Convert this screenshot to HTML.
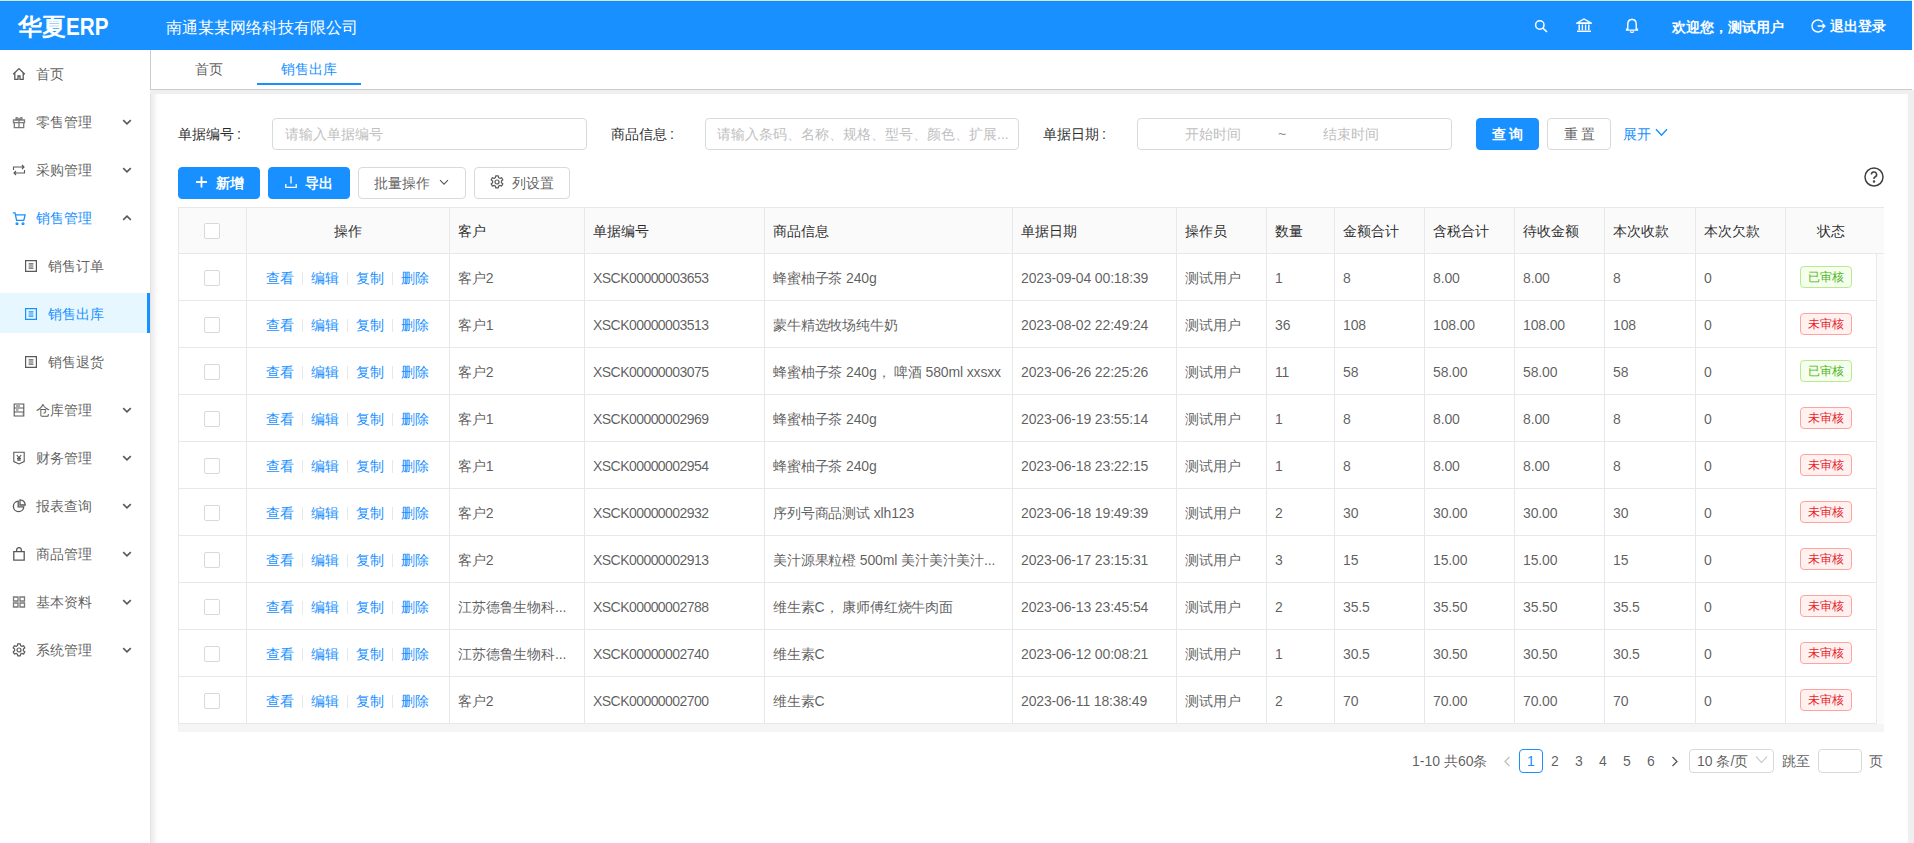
<!DOCTYPE html>
<html><head><meta charset="utf-8">
<style>
*{box-sizing:border-box;margin:0;padding:0}
html,body{width:1914px;height:843px;overflow:hidden;background:#fff;font-family:"Liberation Sans",sans-serif;font-size:14px;color:rgba(0,0,0,.65)}
.abs{position:absolute}
#hdr{left:0;top:0;width:1912px;height:50px;background:#1890ff;border-top:1px solid #b8f2ff;box-shadow:inset 0 1px 0 #2c84dc}
#logo{left:18px;top:11px;color:#fff;font-size:24px;font-weight:bold;line-height:32px}#logo span{display:inline-block;font-size:24px;transform:scaleX(.86);transform-origin:0 50%}
#company{left:166px;top:17px;color:#fff;font-size:16px;line-height:22px;font-weight:500}
.hicon{top:17px}
#welcome{left:1672px;top:17px;color:#fff;font-size:14px;line-height:20px;font-weight:700}
#logout{left:1830px;top:16px;color:#fff;font-size:14px;line-height:20px;font-weight:700}
#side{left:0;top:50px;width:150px;height:793px;background:#fff}
.mi{position:absolute;left:0;width:150px;height:40px;line-height:40px;font-size:14px;color:rgba(0,0,0,.65)}
.mi .ic{position:absolute;left:12px;top:14px;width:14px;height:14px}
.mi .tx{position:absolute;left:36px;top:1px}
.mi .ch{position:absolute;left:122px;top:18px;width:10px;height:6px}
.mi.sub .ic{left:24px}
.mi.sub .tx{left:48px}
.mi.sel{background:#e6f7ff;color:#1890ff}
.mi.sel:after{content:"";position:absolute;right:0;top:0;width:3px;height:40px;background:#1890ff}
#sideline{left:150px;top:50px;width:1px;height:40px;background:#cccccc}
#graybg{left:150px;top:90px;width:1764px;height:753px;background:#efefef}
#tabs{left:151px;top:50px;width:1761px;height:40px;background:#fff;border-bottom:1px solid #cccccc}
.tab{position:absolute;top:9px;line-height:20px;font-size:14px;color:rgba(0,0,0,.65)}
#card{left:154px;top:94px;width:1754px;height:760px;background:#fff}
#rstrip{left:1912px;top:0;width:2px;height:90px;background:#fff}
.lbl{position:absolute;top:124px;line-height:20px;color:rgba(0,0,0,.85);font-size:14px}
.inp{position:absolute;top:118px;height:32px;border:1px solid #d9d9d9;border-radius:4px;background:#fff}
.ph{position:absolute;top:5px;line-height:20px;color:#bfbfbf;font-size:14px;white-space:nowrap}
.btn{position:absolute;height:32px;border-radius:4px;border:1px solid #d9d9d9;background:#fff;color:rgba(0,0,0,.65);font-size:14px;line-height:30px;white-space:nowrap}
.btn.pri{background:#1890ff;border-color:#1890ff;color:#fff}

.hl{position:absolute;left:178px;height:1px;background:#e8e8e8}
.vl{position:absolute;top:207px;width:1px;height:517px;background:#e8e8e8}
.th{position:absolute;margin-top:1px;line-height:20px;color:rgba(0,0,0,.85);white-space:nowrap}
.td{position:absolute;margin-top:1px;line-height:20px;color:rgba(0,0,0,.65);white-space:nowrap;letter-spacing:-0.15px}
.cb{position:absolute;width:16px;height:16px;border:1px solid #d9d9d9;border-radius:2px;background:#fff}
.ops{position:absolute;margin-top:1px;line-height:20px;color:#1890ff;white-space:nowrap;display:flex;align-items:center}
.ops i{display:inline-block;width:1px;height:13px;background:#e8e8e8;margin:0 8px}
.tag{position:absolute;width:52px;height:22px;line-height:21px;font-size:12px;text-align:center;border:1px solid;border-radius:4px}
.tag.g{color:#4db522;background:#f6ffed;border-color:#b7eb8f}
.tag.r{color:#e8222b;background:#fff1f0;border-color:#ffa39e}
.pg{top:749px;width:24px;height:24px;text-align:center;line-height:24px}
</style></head><body>
<div id="hdr" class="abs"></div>
<div id="logo" class="abs">华夏<span>ERP</span></div>
<div id="company" class="abs">南通某某网络科技有限公司</div>
<svg class="abs" style="left:1534px;top:19px" width="14" height="14" viewBox="0 0 14 14" fill="none" stroke="#fff" stroke-width="1.5"><circle cx="5.8" cy="6" r="4.2"/><path d="M8.9 9.1 13 13"/></svg>
<svg class="abs" style="left:1576px;top:18px" width="16" height="15" viewBox="0 0 16 15" fill="none" stroke="#fff" stroke-width="1.4"><path d="M1 5 8 1l7 4zM1.5 5.2h13M3.2 6.5v5.5M6.4 6.5v5.5M9.6 6.5v5.5M12.8 6.5v5.5M1 13.3h14"/></svg>
<svg class="abs" style="left:1625px;top:18px" width="14" height="15" viewBox="0 0 14 15" fill="none" stroke="#fff" stroke-width="1.4"><path d="M7 1.5c-2.6 0-4.2 2-4.2 4.6v5.2H1.6v.8h10.8v-.8h-1.2V6.1C11.2 3.5 9.6 1.5 7 1.5zM5.6 13.2a1.4 1.4 0 0 0 2.8 0M7 .4v1.1"/></svg>
<svg class="abs" style="left:1811px;top:19px" width="15" height="14" viewBox="0 0 15 14" fill="none" stroke="#fff" stroke-width="1.4"><path d="M11.6 3.2A6 6 0 1 0 11.6 10.8M6.5 7h7.5M11.5 4.8 13.8 7l-2.3 2.2"/></svg>
<div id="welcome" class="abs">欢迎您，测试用户</div>
<div id="logout" class="abs">退出登录</div>
<div id="rstrip" class="abs"></div>

<div id="side" class="abs">
 <div class="mi" style="top:3px"><svg class="ic" viewBox="0 0 14 14" fill="none" stroke="#595959" stroke-width="1.3"><path d="M1.2 7.2 7 1.6l5.8 5.6M2.8 5.8v6.6h3.2V9h2v3.4h3.2V5.8"/></svg><span class="tx">首页</span></div>
 <div class="mi" style="top:51px"><svg class="ic" viewBox="0 0 14 14" fill="none" stroke="#7a7a7a" stroke-width="1.3"><path d="M1.5 5h11v2.6h-11zM2.3 7.6v5h9.4v-5M7 5v7.6M7 5C5.5 2 3.8 2.2 4 3.6 4.2 4.8 7 5 7 5c0 0 2.8-.2 3-1.4.2-1.4-1.5-1.6-3 1.4"/></svg><span class="tx">零售管理</span><svg class="ch" viewBox="0 0 10 6" fill="none" stroke="#595959" stroke-width="1.6"><path d="M1.2 1.2 5 4.8 8.8 1.2"/></svg></div>
 <div class="mi" style="top:99px"><svg class="ic" viewBox="0 0 14 14" fill="none" stroke="#595959" stroke-width="1.1"><path d="M1.5 7V4h10.5M10 2l2 2-2 2M12.5 7v3H2M4 12l-2-2 2-2"/></svg><span class="tx">采购管理</span><svg class="ch" viewBox="0 0 10 6" fill="none" stroke="#595959" stroke-width="1.6"><path d="M1.2 1.2 5 4.8 8.8 1.2"/></svg></div>
 <div class="mi" style="top:147px;color:#1890ff"><svg class="ic" viewBox="0 0 14 14" fill="none" stroke="#1890ff" stroke-width="1.3"><path d="M.8 1.8h2.2l1.6 7.6h7.2l1.3-5.6H3.6M5 11.8a.9.9 0 1 0 .01 0M11 11.8a.9.9 0 1 0 .01 0"/></svg><span class="tx">销售管理</span><svg class="ch" viewBox="0 0 10 6" fill="none" stroke="#595959" stroke-width="1.6"><path d="M1.2 4.8 5 1.2 8.8 4.8"/></svg></div>
 <div class="mi sub" style="top:195px"><svg class="ic" viewBox="0 0 14 14" fill="none" stroke="#595959" stroke-width="1.2"><path d="M1.6 1.6h10.8v10.8H1.6zM4.6 4.8h4.8M4.6 7h4.8M4.6 9.2h4.8"/></svg><span class="tx">销售订单</span></div>
 <div class="mi sub sel" style="top:243px"><svg class="ic" viewBox="0 0 14 14" fill="none" stroke="#1890ff" stroke-width="1.2"><path d="M1.6 1.6h10.8v10.8H1.6zM4.6 4.8h4.8M4.6 7h4.8M4.6 9.2h4.8"/></svg><span class="tx">销售出库</span></div>
 <div class="mi sub" style="top:291px"><svg class="ic" viewBox="0 0 14 14" fill="none" stroke="#595959" stroke-width="1.2"><path d="M1.6 1.6h10.8v10.8H1.6zM4.6 4.8h4.8M4.6 7h4.8M4.6 9.2h4.8"/></svg><span class="tx">销售退货</span></div>
 <div class="mi" style="top:339px"><svg class="ic" viewBox="0 0 14 14" fill="none" stroke="#595959" stroke-width="1.1"><path d="M2.2 1h9.6v12H2.2zM2.2 5h9.6M2.2 9h9.6M4 3h4M4 7h2.5M10 11h.6"/></svg><span class="tx">仓库管理</span><svg class="ch" viewBox="0 0 10 6" fill="none" stroke="#595959" stroke-width="1.6"><path d="M1.2 1.2 5 4.8 8.8 1.2"/></svg></div>
 <div class="mi" style="top:387px"><svg class="ic" viewBox="0 0 14 14" fill="none" stroke="#595959" stroke-width="1.1"><path d="M1.8 1.2h10.4v9.4L7 13l-5.2-2.4zM4.8 4l2.2 2.6L9.2 4M7 6.6V10M5 7.4h4M5 9h4"/></svg><span class="tx">财务管理</span><svg class="ch" viewBox="0 0 10 6" fill="none" stroke="#595959" stroke-width="1.6"><path d="M1.2 1.2 5 4.8 8.8 1.2"/></svg></div>
 <div class="mi" style="top:435px"><svg class="ic" viewBox="0 0 14 14" fill="none" stroke="#595959" stroke-width="1.3"><path d="M6.2 2.2a5.2 5.2 0 1 0 5.6 5.6H6.2zM8 .8v5.2h5.2A5.2 5.2 0 0 0 8 .8z"/></svg><span class="tx">报表查询</span><svg class="ch" viewBox="0 0 10 6" fill="none" stroke="#595959" stroke-width="1.6"><path d="M1.2 1.2 5 4.8 8.8 1.2"/></svg></div>
 <div class="mi" style="top:483px"><svg class="ic" viewBox="0 0 14 14" fill="none" stroke="#595959" stroke-width="1.3"><path d="M1.8 4.6h10.4v8.6H1.8zM4.6 4.6V3a2.4 2.4 0 0 1 4.8 0v1.6"/></svg><span class="tx">商品管理</span><svg class="ch" viewBox="0 0 10 6" fill="none" stroke="#595959" stroke-width="1.6"><path d="M1.2 1.2 5 4.8 8.8 1.2"/></svg></div>
 <div class="mi" style="top:531px"><svg class="ic" viewBox="0 0 14 14" fill="none" stroke="#7a7a7a" stroke-width="1.3"><path d="M1.5 2h4.5v4H1.5zM8 2h4.5v4H8zM1.5 8h4.5v4H1.5zM8 8h4.5v4H8z"/></svg><span class="tx">基本资料</span><svg class="ch" viewBox="0 0 10 6" fill="none" stroke="#595959" stroke-width="1.6"><path d="M1.2 1.2 5 4.8 8.8 1.2"/></svg></div>
 <div class="mi" style="top:579px"><svg class="ic" viewBox="0 0 14 14" fill="none" stroke="#595959" stroke-width="1.2"><path d="M5.8.9h2.4l.4 1.8 1.3.7 1.7-.6 1.2 2.1-1.4 1.2v1.6l1.4 1.2-1.2 2.1-1.7-.6-1.3.7-.4 1.8H5.8l-.4-1.8-1.3-.7-1.7.6-1.2-2.1 1.4-1.2V6.1L1.2 4.9l1.2-2.1 1.7.6 1.3-.7z"/><circle cx="7" cy="7" r="2"/></svg><span class="tx">系统管理</span><svg class="ch" viewBox="0 0 10 6" fill="none" stroke="#595959" stroke-width="1.6"><path d="M1.2 1.2 5 4.8 8.8 1.2"/></svg></div>
</div>
<div id="sideline" class="abs"></div>
<div id="graybg" class="abs"></div>
<div id="tabs" class="abs">
  <div class="tab" style="left:44px">首页</div>
  <div class="tab" style="left:130px;color:#1890ff">销售出库</div>
  <div class="abs" style="left:106px;top:33px;width:104px;height:2px;background:#1890ff"></div>
</div>
<div id="card" class="abs"></div>
<div class="abs" style="left:150px;top:94px;width:9px;height:749px;background:linear-gradient(to right,#e3e3e3 0,#e3e3e3 1px,#ececec 1px,#f0f0f0 3px,#f6f6f6 5px,#fcfcfc 7px,#fff 9px)"></div>

<div class="lbl" style="left:178px">单据编号<span style="margin-left:3px">:</span></div>
<div class="inp" style="left:272px;width:315px"><span class="ph" style="left:12px">请输入单据编号</span></div>
<div class="lbl" style="left:611px">商品信息<span style="margin-left:3px">:</span></div>
<div class="inp" style="left:705px;width:314px"><span class="ph" style="left:11px">请输入条码、名称、规格、型号、颜色、扩展...</span></div>
<div class="lbl" style="left:1043px">单据日期<span style="margin-left:3px">:</span></div>
<div class="inp" style="left:1137px;width:315px"><span class="ph" style="left:47px">开始时间</span><span class="ph" style="left:140px;color:#8c8c8c">~</span><span class="ph" style="left:185px">结束时间</span></div>
<div class="btn pri" style="left:1476px;top:118px;width:63px;text-align:center;letter-spacing:3px;padding-left:3px;font-weight:700">查询</div>
<div class="btn" style="left:1547px;top:118px;width:64px;text-align:center;letter-spacing:3px;padding-left:3px">重置</div>
<div class="abs" style="left:1623px;top:124px;line-height:20px;color:#1890ff">展开</div>
<svg class="abs" style="left:1655px;top:128px" width="13" height="9" viewBox="0 0 13 9" fill="none" stroke="#1890ff" stroke-width="1.4"><path d="M1 1.2l5.5 6 5.5-6"/></svg>

<div class="btn pri" style="left:178px;top:167px;width:82px"></div>
<svg class="abs" style="left:196px;top:176px" width="11" height="12" viewBox="0 0 11 12" fill="none" stroke="#fff" stroke-width="1.8"><path d="M5.5 .5v11M0 6h11"/></svg>
<div class="abs" style="left:216px;top:173px;line-height:20px;color:#fff;font-weight:700">新增</div>
<div class="btn pri" style="left:268px;top:167px;width:82px"></div>
<svg class="abs" style="left:285px;top:176px" width="12" height="12" viewBox="0 0 12 12" fill="none" stroke="#fff" stroke-width="1.3"><path d="M6 .3v7.2M.8 8v3.4h10.4V8"/></svg>
<div class="abs" style="left:305px;top:173px;line-height:20px;color:#fff;font-weight:700">导出</div>
<div class="btn" style="left:358px;top:167px;width:108px"></div>
<div class="abs" style="left:374px;top:173px;line-height:20px">批量操作</div>
<svg class="abs" style="left:439px;top:179px" width="10" height="7" viewBox="0 0 10 7" fill="none" stroke="#595959" stroke-width="1.1"><path d="M1 1.2l4 4 4-4"/></svg>
<div class="btn" style="left:474px;top:167px;width:96px"></div>
<svg class="abs" style="left:490px;top:175px" width="14" height="14" viewBox="0 0 14 14" fill="none" stroke="#595959" stroke-width="1.2"><path d="M5.8.9h2.4l.4 1.8 1.3.7 1.7-.6 1.2 2.1-1.4 1.2v1.6l1.4 1.2-1.2 2.1-1.7-.6-1.3.7-.4 1.8H5.8l-.4-1.8-1.3-.7-1.7.6-1.2-2.1 1.4-1.2V6.1L1.2 4.9l1.2-2.1 1.7.6 1.3-.7z"/><circle cx="7" cy="7" r="2"/></svg>
<div class="abs" style="left:512px;top:173px;line-height:20px">列设置</div>
<svg class="abs" style="left:1864px;top:167px" width="20" height="20" viewBox="0 0 20 20" fill="none" stroke="#404040" stroke-width="1.5"><circle cx="10" cy="10" r="9"/><path d="M7.4 7.6a2.6 2.6 0 1 1 3.6 2.4c-.7.3-1 .8-1 1.5v.6"/><circle cx="10" cy="14.6" r=".5" fill="#404040"/></svg>
<div class="abs" style="left:178px;top:207px;width:1706px;height:46px;background:#fafafa"></div>
<div class="abs" style="left:178px;top:724px;width:1706px;height:8px;background:#f5f5f5"></div>
<div class="abs" style="left:1876px;top:253px;width:8px;height:471px;background:#fbfbfb"></div>
<div class="hl" style="top:207px;width:1706px"></div>
<div class="hl" style="top:253px;width:1706px"></div>
<div class="hl" style="top:300px;width:1698px"></div>
<div class="hl" style="top:347px;width:1698px"></div>
<div class="hl" style="top:394px;width:1698px"></div>
<div class="hl" style="top:441px;width:1698px"></div>
<div class="hl" style="top:488px;width:1698px"></div>
<div class="hl" style="top:535px;width:1698px"></div>
<div class="hl" style="top:582px;width:1698px"></div>
<div class="hl" style="top:629px;width:1698px"></div>
<div class="hl" style="top:676px;width:1698px"></div>
<div class="hl" style="top:723px;width:1698px"></div>
<div class="vl" style="left:178px"></div>
<div class="vl" style="left:246px"></div>
<div class="vl" style="left:449px"></div>
<div class="vl" style="left:584px"></div>
<div class="vl" style="left:764px"></div>
<div class="vl" style="left:1012px"></div>
<div class="vl" style="left:1176px"></div>
<div class="vl" style="left:1266px"></div>
<div class="vl" style="left:1334px"></div>
<div class="vl" style="left:1424px"></div>
<div class="vl" style="left:1514px"></div>
<div class="vl" style="left:1604px"></div>
<div class="vl" style="left:1695px"></div>
<div class="vl" style="left:1785px"></div>
<div class="vl" style="left:1876px;top:253px;height:471px"></div>
<div class="cb" style="left:204px;top:223px"></div>
<div class="th" style="left:246px;top:220px;width:203px;text-align:center">操作</div>
<div class="th" style="left:458px;top:220px">客户</div>
<div class="th" style="left:593px;top:220px">单据编号</div>
<div class="th" style="left:773px;top:220px">商品信息</div>
<div class="th" style="left:1021px;top:220px">单据日期</div>
<div class="th" style="left:1185px;top:220px">操作员</div>
<div class="th" style="left:1275px;top:220px">数量</div>
<div class="th" style="left:1343px;top:220px">金额合计</div>
<div class="th" style="left:1433px;top:220px">含税合计</div>
<div class="th" style="left:1523px;top:220px">待收金额</div>
<div class="th" style="left:1613px;top:220px">本次收款</div>
<div class="th" style="left:1704px;top:220px">本次欠款</div>
<div class="th" style="left:1785px;top:220px;width:91px;text-align:center">状态</div>
<div class="cb" style="left:204px;top:270px"></div>
<div class="ops" style="left:266px;top:267px"><span>查看</span><i></i><span>编辑</span><i></i><span>复制</span><i></i><span>删除</span></div>
<div class="td" style="left:458px;top:267px">客户2</div>
<div class="td" style="left:593px;top:267px;letter-spacing:-0.55px">XSCK00000003653</div>
<div class="td" style="left:773px;top:267px">蜂蜜柚子茶 240g</div>
<div class="td" style="left:1021px;top:267px">2023-09-04 00:18:39</div>
<div class="td" style="left:1185px;top:267px">测试用户</div>
<div class="td" style="left:1275px;top:267px">1</div>
<div class="td" style="left:1343px;top:267px">8</div>
<div class="td" style="left:1433px;top:267px">8.00</div>
<div class="td" style="left:1523px;top:267px">8.00</div>
<div class="td" style="left:1613px;top:267px">8</div>
<div class="td" style="left:1704px;top:267px">0</div>
<div class="tag g" style="left:1800px;top:266px">已审核</div>
<div class="cb" style="left:204px;top:317px"></div>
<div class="ops" style="left:266px;top:314px"><span>查看</span><i></i><span>编辑</span><i></i><span>复制</span><i></i><span>删除</span></div>
<div class="td" style="left:458px;top:314px">客户1</div>
<div class="td" style="left:593px;top:314px;letter-spacing:-0.55px">XSCK00000003513</div>
<div class="td" style="left:773px;top:314px">蒙牛精选牧场纯牛奶</div>
<div class="td" style="left:1021px;top:314px">2023-08-02 22:49:24</div>
<div class="td" style="left:1185px;top:314px">测试用户</div>
<div class="td" style="left:1275px;top:314px">36</div>
<div class="td" style="left:1343px;top:314px">108</div>
<div class="td" style="left:1433px;top:314px">108.00</div>
<div class="td" style="left:1523px;top:314px">108.00</div>
<div class="td" style="left:1613px;top:314px">108</div>
<div class="td" style="left:1704px;top:314px">0</div>
<div class="tag r" style="left:1800px;top:313px">未审核</div>
<div class="cb" style="left:204px;top:364px"></div>
<div class="ops" style="left:266px;top:361px"><span>查看</span><i></i><span>编辑</span><i></i><span>复制</span><i></i><span>删除</span></div>
<div class="td" style="left:458px;top:361px">客户2</div>
<div class="td" style="left:593px;top:361px;letter-spacing:-0.55px">XSCK00000003075</div>
<div class="td" style="left:773px;top:361px">蜂蜜柚子茶 240g， 啤酒 580ml xxsxx</div>
<div class="td" style="left:1021px;top:361px">2023-06-26 22:25:26</div>
<div class="td" style="left:1185px;top:361px">测试用户</div>
<div class="td" style="left:1275px;top:361px">11</div>
<div class="td" style="left:1343px;top:361px">58</div>
<div class="td" style="left:1433px;top:361px">58.00</div>
<div class="td" style="left:1523px;top:361px">58.00</div>
<div class="td" style="left:1613px;top:361px">58</div>
<div class="td" style="left:1704px;top:361px">0</div>
<div class="tag g" style="left:1800px;top:360px">已审核</div>
<div class="cb" style="left:204px;top:411px"></div>
<div class="ops" style="left:266px;top:408px"><span>查看</span><i></i><span>编辑</span><i></i><span>复制</span><i></i><span>删除</span></div>
<div class="td" style="left:458px;top:408px">客户1</div>
<div class="td" style="left:593px;top:408px;letter-spacing:-0.55px">XSCK00000002969</div>
<div class="td" style="left:773px;top:408px">蜂蜜柚子茶 240g</div>
<div class="td" style="left:1021px;top:408px">2023-06-19 23:55:14</div>
<div class="td" style="left:1185px;top:408px">测试用户</div>
<div class="td" style="left:1275px;top:408px">1</div>
<div class="td" style="left:1343px;top:408px">8</div>
<div class="td" style="left:1433px;top:408px">8.00</div>
<div class="td" style="left:1523px;top:408px">8.00</div>
<div class="td" style="left:1613px;top:408px">8</div>
<div class="td" style="left:1704px;top:408px">0</div>
<div class="tag r" style="left:1800px;top:407px">未审核</div>
<div class="cb" style="left:204px;top:458px"></div>
<div class="ops" style="left:266px;top:455px"><span>查看</span><i></i><span>编辑</span><i></i><span>复制</span><i></i><span>删除</span></div>
<div class="td" style="left:458px;top:455px">客户1</div>
<div class="td" style="left:593px;top:455px;letter-spacing:-0.55px">XSCK00000002954</div>
<div class="td" style="left:773px;top:455px">蜂蜜柚子茶 240g</div>
<div class="td" style="left:1021px;top:455px">2023-06-18 23:22:15</div>
<div class="td" style="left:1185px;top:455px">测试用户</div>
<div class="td" style="left:1275px;top:455px">1</div>
<div class="td" style="left:1343px;top:455px">8</div>
<div class="td" style="left:1433px;top:455px">8.00</div>
<div class="td" style="left:1523px;top:455px">8.00</div>
<div class="td" style="left:1613px;top:455px">8</div>
<div class="td" style="left:1704px;top:455px">0</div>
<div class="tag r" style="left:1800px;top:454px">未审核</div>
<div class="cb" style="left:204px;top:505px"></div>
<div class="ops" style="left:266px;top:502px"><span>查看</span><i></i><span>编辑</span><i></i><span>复制</span><i></i><span>删除</span></div>
<div class="td" style="left:458px;top:502px">客户2</div>
<div class="td" style="left:593px;top:502px;letter-spacing:-0.55px">XSCK00000002932</div>
<div class="td" style="left:773px;top:502px">序列号商品测试 xlh123</div>
<div class="td" style="left:1021px;top:502px">2023-06-18 19:49:39</div>
<div class="td" style="left:1185px;top:502px">测试用户</div>
<div class="td" style="left:1275px;top:502px">2</div>
<div class="td" style="left:1343px;top:502px">30</div>
<div class="td" style="left:1433px;top:502px">30.00</div>
<div class="td" style="left:1523px;top:502px">30.00</div>
<div class="td" style="left:1613px;top:502px">30</div>
<div class="td" style="left:1704px;top:502px">0</div>
<div class="tag r" style="left:1800px;top:501px">未审核</div>
<div class="cb" style="left:204px;top:552px"></div>
<div class="ops" style="left:266px;top:549px"><span>查看</span><i></i><span>编辑</span><i></i><span>复制</span><i></i><span>删除</span></div>
<div class="td" style="left:458px;top:549px">客户2</div>
<div class="td" style="left:593px;top:549px;letter-spacing:-0.55px">XSCK00000002913</div>
<div class="td" style="left:773px;top:549px">美汁源果粒橙 500ml 美汁美汁美汁...</div>
<div class="td" style="left:1021px;top:549px">2023-06-17 23:15:31</div>
<div class="td" style="left:1185px;top:549px">测试用户</div>
<div class="td" style="left:1275px;top:549px">3</div>
<div class="td" style="left:1343px;top:549px">15</div>
<div class="td" style="left:1433px;top:549px">15.00</div>
<div class="td" style="left:1523px;top:549px">15.00</div>
<div class="td" style="left:1613px;top:549px">15</div>
<div class="td" style="left:1704px;top:549px">0</div>
<div class="tag r" style="left:1800px;top:548px">未审核</div>
<div class="cb" style="left:204px;top:599px"></div>
<div class="ops" style="left:266px;top:596px"><span>查看</span><i></i><span>编辑</span><i></i><span>复制</span><i></i><span>删除</span></div>
<div class="td" style="left:458px;top:596px">江苏德鲁生物科...</div>
<div class="td" style="left:593px;top:596px;letter-spacing:-0.55px">XSCK00000002788</div>
<div class="td" style="left:773px;top:596px">维生素C， 康师傅红烧牛肉面</div>
<div class="td" style="left:1021px;top:596px">2023-06-13 23:45:54</div>
<div class="td" style="left:1185px;top:596px">测试用户</div>
<div class="td" style="left:1275px;top:596px">2</div>
<div class="td" style="left:1343px;top:596px">35.5</div>
<div class="td" style="left:1433px;top:596px">35.50</div>
<div class="td" style="left:1523px;top:596px">35.50</div>
<div class="td" style="left:1613px;top:596px">35.5</div>
<div class="td" style="left:1704px;top:596px">0</div>
<div class="tag r" style="left:1800px;top:595px">未审核</div>
<div class="cb" style="left:204px;top:646px"></div>
<div class="ops" style="left:266px;top:643px"><span>查看</span><i></i><span>编辑</span><i></i><span>复制</span><i></i><span>删除</span></div>
<div class="td" style="left:458px;top:643px">江苏德鲁生物科...</div>
<div class="td" style="left:593px;top:643px;letter-spacing:-0.55px">XSCK00000002740</div>
<div class="td" style="left:773px;top:643px">维生素C</div>
<div class="td" style="left:1021px;top:643px">2023-06-12 00:08:21</div>
<div class="td" style="left:1185px;top:643px">测试用户</div>
<div class="td" style="left:1275px;top:643px">1</div>
<div class="td" style="left:1343px;top:643px">30.5</div>
<div class="td" style="left:1433px;top:643px">30.50</div>
<div class="td" style="left:1523px;top:643px">30.50</div>
<div class="td" style="left:1613px;top:643px">30.5</div>
<div class="td" style="left:1704px;top:643px">0</div>
<div class="tag r" style="left:1800px;top:642px">未审核</div>
<div class="cb" style="left:204px;top:693px"></div>
<div class="ops" style="left:266px;top:690px"><span>查看</span><i></i><span>编辑</span><i></i><span>复制</span><i></i><span>删除</span></div>
<div class="td" style="left:458px;top:690px">客户2</div>
<div class="td" style="left:593px;top:690px;letter-spacing:-0.55px">XSCK00000002700</div>
<div class="td" style="left:773px;top:690px">维生素C</div>
<div class="td" style="left:1021px;top:690px">2023-06-11 18:38:49</div>
<div class="td" style="left:1185px;top:690px">测试用户</div>
<div class="td" style="left:1275px;top:690px">2</div>
<div class="td" style="left:1343px;top:690px">70</div>
<div class="td" style="left:1433px;top:690px">70.00</div>
<div class="td" style="left:1523px;top:690px">70.00</div>
<div class="td" style="left:1613px;top:690px">70</div>
<div class="td" style="left:1704px;top:690px">0</div>
<div class="tag r" style="left:1800px;top:689px">未审核</div>
<div class="abs" style="left:1412px;top:751px;line-height:20px">1-10 共60条</div>
<svg class="abs" style="left:1503px;top:756px" width="8" height="11" viewBox="0 0 8 11" fill="none" stroke="#bfbfbf" stroke-width="1.3"><path d="M6.5 1 2 5.5 6.5 10"/></svg>
<div class="abs" style="left:1519px;top:749px;width:24px;height:24px;border:1px solid #1890ff;border-radius:4px;color:#1890ff;text-align:center;line-height:22px">1</div>
<div class="abs pg" style="left:1543px">2</div>
<div class="abs pg" style="left:1567px">3</div>
<div class="abs pg" style="left:1591px">4</div>
<div class="abs pg" style="left:1615px">5</div>
<div class="abs pg" style="left:1639px">6</div>
<svg class="abs" style="left:1671px;top:756px" width="8" height="11" viewBox="0 0 8 11" fill="none" stroke="#595959" stroke-width="1.3"><path d="M1.5 1 6 5.5 1.5 10"/></svg>
<div class="abs" style="left:1689px;top:749px;width:85px;height:24px;border:1px solid #d9d9d9;border-radius:4px;line-height:22px;padding-left:7px">10 条/页</div>
<svg class="abs" style="left:1755px;top:755px" width="13" height="10" viewBox="0 0 13 10" fill="none" stroke="#bfbfbf" stroke-width="1.1"><path d="M1 1.5l5.5 6 5.5-6"/></svg>
<div class="abs" style="left:1782px;top:751px;line-height:20px">跳至</div>
<div class="abs" style="left:1818px;top:749px;width:44px;height:24px;border:1px solid #d9d9d9;border-radius:4px"></div>
<div class="abs" style="left:1869px;top:751px;line-height:20px">页</div>
</body></html>
